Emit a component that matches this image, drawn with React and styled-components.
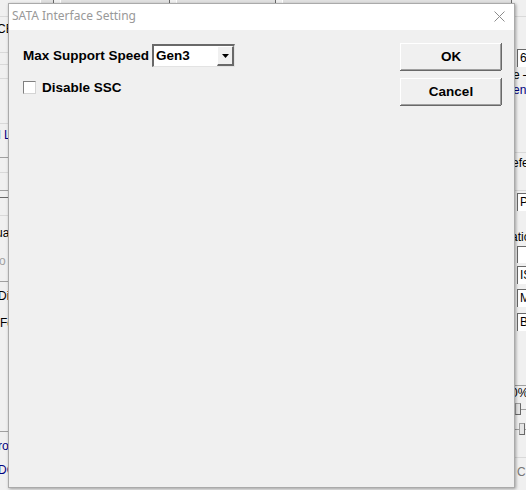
import React from "react";
import styled, { createGlobalStyle } from "styled-components";

const GlobalStyle = createGlobalStyle`
  html, body {
    margin: 0;
    padding: 0;
    background: #f0f0f0;
    overflow: hidden;
  }
`;

// bits of the main window that peek out round the dialog
const leftStrip = [
  { h: 13, line: "#d9d9d9" },
  { h: 24, text: "CB", indent: -3 },
  { h: 12, line: "#d9d9d9" },
  { h: 12, line: "#d9d9d9" },
  { h: 14, line: "#d9d9d9" },
  { h: 13 },
  { h: 32, line: "#d9d9d9" },
  { h: 22, text: "l L", color: "#000080", indent: -2 },
  { h: 12, line: "#a0a0a0" },
  { h: 15, line: "#d9d9d9" },
  { h: 18, line: "#a0a0a0" },
  { h: 7, line: "#696969" },
  { h: 18, line: "#d9d9d9" },
  { h: 34, text: "ua", indent: -4 },
  { h: 22, text: "o", color: "#a0a0a0", indent: -1 },
  { h: 10, line: "#a0a0a0" },
  { h: 28, text: "Dis", indent: -2 },
  { h: 26, text: "Fc", indent: 0 },
  { h: 96, line: "#a0a0a0" },
  { h: 28, text: "ro", color: "#000080", indent: -2 },
  { h: 20, text: "DC", color: "#000080", indent: -2 },
];

const rightStrip = [
  { h: 13, line: "#d9d9d9" },
  { h: 31 },
  { h: 20, box: "6" },
  { h: 14, text: "e —", indent: -2 },
  { h: 16, text: "ent", color: "#000080", indent: -2 },
  { h: 55, line: "#d9d9d9" },
  { h: 20, text: "efe", indent: -3 },
  { h: 18, line: "#d9d9d9" },
  { h: 21, box: "P" },
  { h: 16, text: "l", color: "#000080", indent: -3 },
  { h: 18, text: "atic", indent: -4 },
  { h: 17, box: "" },
  { h: 23, box: "IS" },
  { h: 24, box: "M" },
  { h: 24, box: "B" },
  { h: 52, line: "#a0a0a0" },
  { h: 14, text: "0%", indent: -4 },
  { h: 18, thumb: 0 },
  { h: 22, thumb: 4 },
  { h: 18, line: "#d9d9d9" },
  { h: 27, text: "C", color: "#777", indent: 2 },
];

function Strip({ items }) {
  return (
    <Column>
      {items.map((it, i) => (
        <Cell key={i} $h={it.h} $line={it.line}>
          {it.box !== undefined && <MiniBox>{it.box}</MiniBox>}
          {it.thumb !== undefined && (
            <Track>
              <Thumb $offset={it.thumb} />
            </Track>
          )}
          {it.text && (
            <CellText $color={it.color} $indent={it.indent}>
              {it.text}
            </CellText>
          )}
        </Cell>
      ))}
    </Column>
  );
}

function CloseIcon() {
  return (
    <svg width="11" height="11" viewBox="0 0 11 11">
      <path d="M0.5 0.5 L10.5 10.5 M10.5 0.5 L0.5 10.5" stroke="#8c8c8c" strokeWidth="1" fill="none" />
    </svg>
  );
}

function DownArrow() {
  return (
    <svg width="7" height="4" viewBox="0 0 7 4">
      <path d="M0 0 H7 L3.5 4 Z" fill="#000" />
    </svg>
  );
}

export default function App() {
  return (
    <Desktop>
      <GlobalStyle />
      <BackApp>
        <TopBar>
          <TopButton $w={14} />
          <TopButton $w={110} />
          <TopButton $w={100} />
          <TopButton $w={230} />
        </TopBar>
        <Sides>
          <Strip items={leftStrip} />
          <Strip items={rightStrip} />
        </Sides>
      </BackApp>

      <Dialog>
        <TitleBar>
          <Title>SATA Interface Setting</Title>
          <CloseButton>
            <CloseIcon />
          </CloseButton>
        </TitleBar>
        <Client>
          <Form>
            <FieldRow>
              <Label>Max Support Speed</Label>
              <Combo>
                <ComboValue>Gen3</ComboValue>
                <ComboArrow>
                  <DownArrow />
                </ComboArrow>
              </Combo>
            </FieldRow>
            <CheckRow>
              <CheckBox />
              <Label>Disable SSC</Label>
            </CheckRow>
          </Form>
          <Buttons>
            <PushButton>OK</PushButton>
            <PushButton>Cancel</PushButton>
          </Buttons>
        </Client>
      </Dialog>
    </Desktop>
  );
}

const Desktop = styled.div`
  position: relative;
  width: 526px;
  height: 490px;
  overflow: hidden;
  background: #f0f0f0;
  font-family: "Liberation Sans", Arial, sans-serif;
`;

const BackApp = styled.div`
  display: flex;
  flex-direction: column;
  height: 100%;
`;

const TopBar = styled.div`
  display: flex;
  gap: 6px;
  height: 4px;
  padding-left: 40px;
  overflow: hidden;
`;

const TopButton = styled.div`
  width: ${(p) => p.$w}px;
  height: 4px;
  box-sizing: border-box;
  background: #e1e1e1;
  border-right: 1px solid #696969;
  border-left: 1px solid #fff;
  border-bottom: 1px solid #a0a0a0;
`;

const Sides = styled.div`
  flex: 1;
  display: flex;
  justify-content: space-between;
`;

const Column = styled.div`
  display: flex;
  flex-direction: column;
  overflow: hidden;
  &:first-child {
    width: 8px;
  }
  &:last-child {
    width: 11px;
  }
`;

const Cell = styled.div`
  height: ${(p) => p.$h}px;
  flex: none;
  display: flex;
  align-items: center;
  box-sizing: border-box;
  border-bottom: ${(p) => (p.$line ? `1px solid ${p.$line}` : "none")};
  overflow: hidden;
`;

const CellText = styled.span`
  font-size: 12px;
  white-space: nowrap;
  color: ${(p) => p.$color || "#000"};
  margin-left: ${(p) => p.$indent || 0}px;
`;

const MiniBox = styled.div`
  margin-left: 2px;
  width: 30px;
  flex: none;
  height: 18px;
  box-sizing: border-box;
  background: #fff;
  border-top: 1px solid #696969;
  border-left: 1px solid #696969;
  font-size: 12px;
  line-height: 16px;
  padding-left: 2px;
  color: #000;
`;

const Track = styled.div`
  flex: none;
  width: 11px;
  height: 12px;
  display: flex;
  align-items: center;
  background: linear-gradient(#a0a0a0, #a0a0a0) no-repeat 0 50% / 100% 1px;
`;

const Thumb = styled.div`
  margin-left: ${(p) => p.$offset}px;
  width: 6px;
  height: 12px;
  box-sizing: border-box;
  background: #e5e5e5;
  border: 1px solid #a0a0a0;
  border-right-color: #696969;
  border-bottom-color: #696969;
`;

const Dialog = styled.div`
  position: absolute;
  left: 8px;
  top: 3px;
  width: 507px;
  height: 485px;
  box-sizing: border-box;
  border: 1px solid #aaaaaa;
  background: #f0f0f0;
  box-shadow: 1px 1px 3px rgba(0, 0, 0, 0.35);
  display: flex;
  flex-direction: column;
`;

const TitleBar = styled.div`
  height: 26px;
  flex: none;
  background: #fff;
  display: flex;
  align-items: center;
  justify-content: space-between;
  padding: 0 9px 0 3px;
`;

const Title = styled.span`
  font-family: "Noto Sans", "Liberation Sans", sans-serif;
  font-size: 12px;
  color: #999999;
  margin-top: -3px;
`;

const CloseButton = styled.div`
  display: flex;
  align-items: center;
  margin-top: -2px;
`;

const Client = styled.div`
  flex: 1;
  display: flex;
  padding: 13px 13px 0 14px;
`;

const Form = styled.div`
  flex: 1;
  display: flex;
  flex-direction: column;
  gap: 14px;
`;

const FieldRow = styled.div`
  display: flex;
  align-items: center;
  gap: 3px;
  margin-top: 1px;
`;

const CheckRow = styled.div`
  display: flex;
  align-items: center;
  gap: 6px;
  margin-top: -1px;
`;

const Label = styled.span`
  font-family: "Liberation Sans", Arial, sans-serif;
  font-weight: bold;
  font-size: 13.5px;
  color: #000;
  white-space: nowrap;
`;

const Combo = styled.div`
  width: 83px;
  height: 23px;
  box-sizing: border-box;
  background: #fff;
  border-top: 2px solid #696969;
  border-left: 2px solid #696969;
  border-right: 1px solid #e3e3e3;
  border-bottom: 1px solid #e3e3e3;
  display: flex;
  align-items: stretch;
`;

const ComboValue = styled.span`
  flex: 1;
  font-weight: bold;
  font-size: 13.5px;
  line-height: 20px;
  padding-left: 2px;
  color: #000;
`;

const ComboArrow = styled.div`
  width: 17px;
  box-sizing: border-box;
  background: #f0f0f0;
  border-top: 1px solid #fff;
  border-left: 1px solid #fff;
  border-right: 2px solid #696969;
  border-bottom: 2px solid #696969;
  display: flex;
  align-items: center;
  justify-content: center;
`;

const CheckBox = styled.div`
  width: 13px;
  height: 13px;
  box-sizing: border-box;
  background: #fff;
  border-top: 1px solid #808080;
  border-left: 1px solid #808080;
  border-right: 1px solid #d4d4d4;
  border-bottom: 1px solid #d4d4d4;
`;

const Buttons = styled.div`
  width: 101px;
  display: flex;
  flex-direction: column;
  gap: 8px;
`;

const PushButton = styled.button`
  height: 27px;
  box-sizing: border-box;
  background: #f0f0f0;
  border: none;
  border-top: 1px solid #fff;
  border-left: 1px solid #fff;
  box-shadow: inset -1px -1px 0 #a0a0a0, 0 1px 0 #696969, 1px 0 0 #696969;
  font-family: "Liberation Sans", Arial, sans-serif;
  font-weight: bold;
  font-size: 13.5px;
  line-height: 24px;
  color: #000;
  padding: 0;
`;
